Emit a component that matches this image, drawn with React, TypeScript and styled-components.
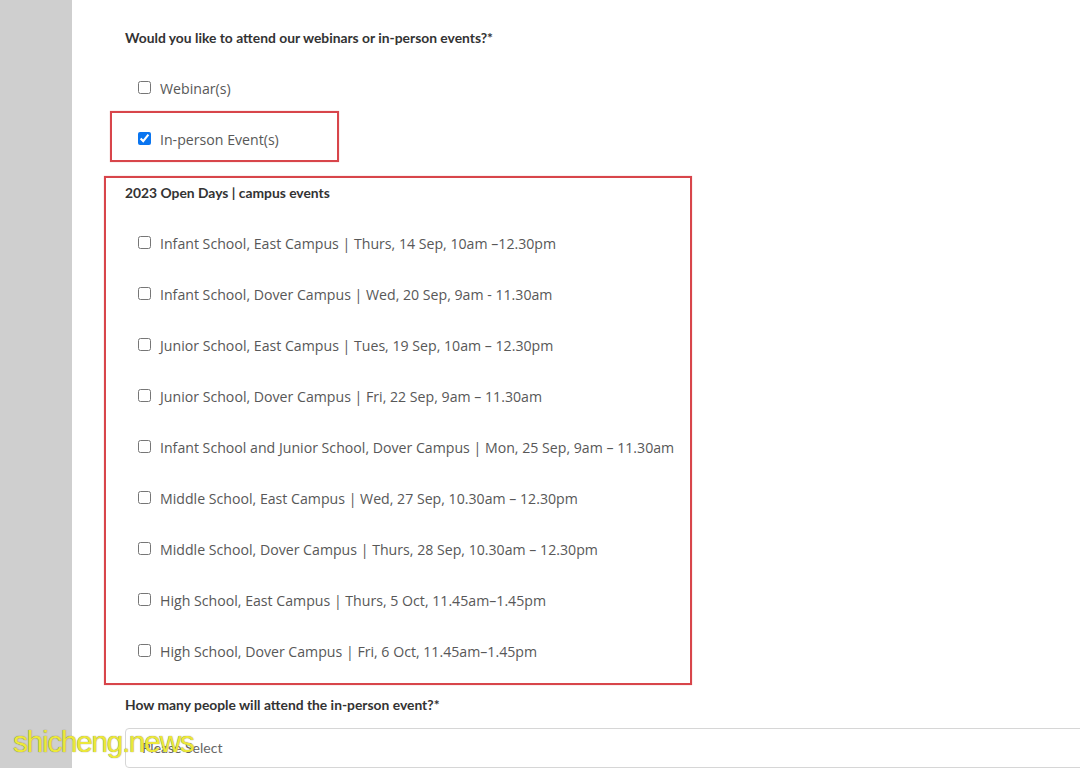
import React from "react";
import styled, { createGlobalStyle } from "styled-components";

const Global = createGlobalStyle`
  html, body { margin: 0; padding: 0; background: #fff; overflow: hidden; }
  body { width: 1080px; height: 768px; }
  #root { height: 768px; }
`;

const Page = styled.div`
  display: flex;
  height: 768px;
  position: relative;
  overflow: hidden;
`;

const Sidebar = styled.div`
  width: 72px;
  flex: none;
  background: #cfcfcf;
`;

const Main = styled.main`
  flex: 1;
  display: flex;
  flex-direction: column;
  align-items: flex-start;
  padding: 28px 0 0 53px;
  background: #fff;
`;

const Question = styled.div<{ $top?: number }>`
  font-family: Lato, "Liberation Sans", sans-serif;
  font-weight: 700;
  font-size: 13.85px;
  line-height: 20px;
  color: #333;
  margin-top: ${(p) => p.$top ?? 0}px;
  white-space: nowrap;
`;

const Option = styled.label<{ $top?: number; $indent?: number }>`
  display: flex;
  align-items: center;
  gap: 9px;
  height: 20px;
  margin-top: ${(p) => p.$top ?? 0}px;
  margin-left: ${(p) => p.$indent ?? 0}px;
  font-family: "Open Sans", "Liberation Sans", sans-serif;
  font-size: 14.15px;
  color: #585858;
  white-space: nowrap;
  input {
    width: 13px;
    height: 13px;
    margin: 0 0 2px 0;
    accent-color: #0a75f0;
  }
`;

const Highlight = styled.div<{ $top: number; $left: number; $width: number }>`
  border: 2px solid #d8454b;
  box-shadow: 0 0 1px rgba(216, 69, 75, 0.5);
  margin-top: ${(p) => p.$top}px;
  margin-left: ${(p) => p.$left}px;
  width: ${(p) => p.$width}px;
  box-sizing: border-box;
  display: flex;
  flex-direction: column;
`;

const SmallBox = styled(Highlight)`
  padding: 16px 0 11px 26px;
`;

const EventBox = styled(Highlight)`
  padding: 5px 0 21px 19px;
`;

const EventList = styled.div`
  display: flex;
  flex-direction: column;
  gap: 31.1px;
  margin-top: 30px;
`;

const Select = styled.div`
  margin-top: 13px;
  width: 1000px;
  height: 44px;
  border: 1px solid #d6d6d6;
  border-radius: 4px;
  display: flex;
  align-items: center;
  padding-left: 16px;
  box-sizing: border-box;
  font-family: Lato, "Liberation Sans", sans-serif;
  font-size: 14px;
  color: #666;
`;

const Watermark = styled.div`
  position: absolute;
  left: 13px;
  top: 725px;
  font-family: "Liberation Sans", Arial, sans-serif;
  font-size: 30px;
  letter-spacing: -1.4px;
  color: #ece83a;
  text-shadow: 0 0 1px rgba(70, 70, 0, 0.8);
  pointer-events: none;
`;

const events = [
  "Infant School, East Campus | Thurs, 14 Sep, 10am \u201312.30pm",
  "Infant School, Dover Campus | Wed, 20 Sep, 9am - 11.30am",
  "Junior School, East Campus | Tues, 19 Sep, 10am \u2013 12.30pm",
  "Junior School, Dover Campus | Fri, 22 Sep, 9am \u2013 11.30am",
  "Infant School and Junior School, Dover Campus | Mon, 25 Sep, 9am \u2013 11.30am",
  "Middle School, East Campus | Wed, 27 Sep, 10.30am \u2013 12.30pm",
  "Middle School, Dover Campus | Thurs, 28 Sep, 10.30am \u2013 12.30pm",
  "High School, East Campus | Thurs, 5 Oct, 11.45am\u20131.45pm",
  "High School, Dover Campus | Fri, 6 Oct, 11.45am\u20131.45pm",
];

export default function App() {
  return (
    <Page>
      <Global />
      <Sidebar />
      <Main>
        <Question>Would you like to attend our webinars or in-person events?*</Question>
        <Option $top={31} $indent={13}>
          <input type="checkbox" />
          <span>Webinar(s)</span>
        </Option>
        <SmallBox $top={13} $left={-15} $width={229}>
          <Option>
            <input type="checkbox" defaultChecked />
            <span>In-person Event(s)</span>
          </Option>
        </SmallBox>
        <EventBox $top={14} $left={-21} $width={588}>
          <Question>2023 Open Days | campus events</Question>
          <EventList>
            {events.map((e) => (
              <Option key={e} $indent={13}>
                <input type="checkbox" />
                <span>{e}</span>
              </Option>
            ))}
          </EventList>
        </EventBox>
        <Question $top={10}>How many people will attend the in-person event?*</Question>
        <Select>Please Select</Select>
      </Main>
      <Watermark>shicheng.news</Watermark>
    </Page>
  );
}
